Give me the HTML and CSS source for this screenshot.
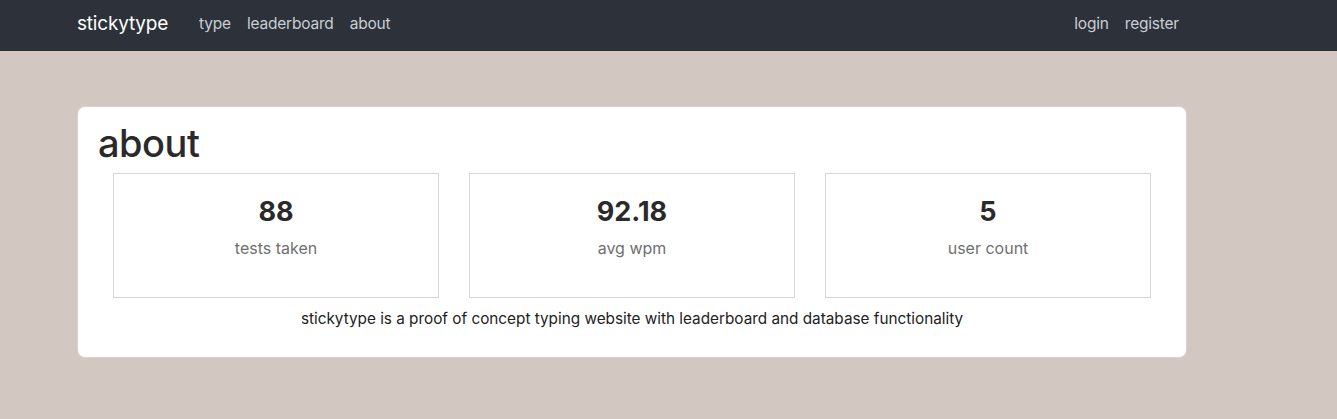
FILE: index.html
```html
<!DOCTYPE html>
<html>
<head>
<meta charset="utf-8">
<link rel="stylesheet" href="styles.css">
</head>
<body>
<nav class="navbar">
  <div class="nav-inner">
    <a class="brand">stickytype</a>
    <div class="nav-links">
      <a class="nav-link">type</a>
      <a class="nav-link">leaderboard</a>
      <a class="nav-link">about</a>
    </div>
    <div class="nav-right">
      <a class="nav-link">login</a>
      <a class="nav-link">register</a>
    </div>
  </div>
</nav>
<main class="main">
  <section class="card">
    <h1 class="title">about</h1>
    <div class="stats">
      <div class="stat"><div class="stat-num">88</div><div class="stat-label">tests taken</div></div>
      <div class="stat"><div class="stat-num">92.18</div><div class="stat-label">avg wpm</div></div>
      <div class="stat"><div class="stat-num">5</div><div class="stat-label">user count</div></div>
    </div>
    <p class="desc">stickytype is a proof of concept typing website with leaderboard and database functionality</p>
  </section>
</main>
</body>
</html>
```
FILE: styles.css
```css
* { box-sizing: border-box; }
html, body { margin: 0; padding: 0; }
body {
  background: #d3c7c2;
  font-family: Inter, "Noto Sans", sans-serif;
  color: #212529;
  height: 419px;
  overflow: hidden;
}
.navbar {
  background: #2d3139;
  height: 51px;
}
.nav-inner {
  width: 1110px;
  margin-left: 77px;
  height: 46px;
  display: flex;
  align-items: center;
}
.brand {
  color: #fff;
  font-size: 19px;
  margin-right: 31px;
  letter-spacing: -0.2px;
}
.nav-links, .nav-right { display: flex; gap: 16px; }
.nav-right { margin-left: auto; padding-right: 8px; }
.nav-link {
  color: #c9cdd3;
  font-size: 15.5px;
  letter-spacing: -0.2px;
}
.main { padding: 55px 0 0 77px; }
.card {
  width: 1110px;
  height: 252px;
  background: #fff;
  border: 1px solid #d8d2cf;
  border-radius: 8px;
  padding: 14px 20px 0 20px;
}
.title {
  margin: 0;
  font-size: 38px;
  font-weight: 500;
  line-height: 44px;
  color: #2a2a2a;
  letter-spacing: -0.5px;
}
.stats {
  display: flex;
  gap: 30px;
  margin: 8px 15px 0 15px;
}
.stat {
  flex: 1;
  height: 125px;
  border: 1px solid #d6d6d6;
  text-align: center;
  padding-top: 23px;
}
.stat-num {
  font-size: 27px;
  font-weight: 700;
  line-height: 30px;
  color: #2a2a2a;
}
.stat-label {
  margin-top: 11px;
  font-size: 16px;
  line-height: 20px;
  color: #6f6f6f;
}
.desc {
  margin: 11px 0 0 0;
  text-align: center;
  font-size: 15.3px;
  line-height: 20px;
  color: #222;
}
```
